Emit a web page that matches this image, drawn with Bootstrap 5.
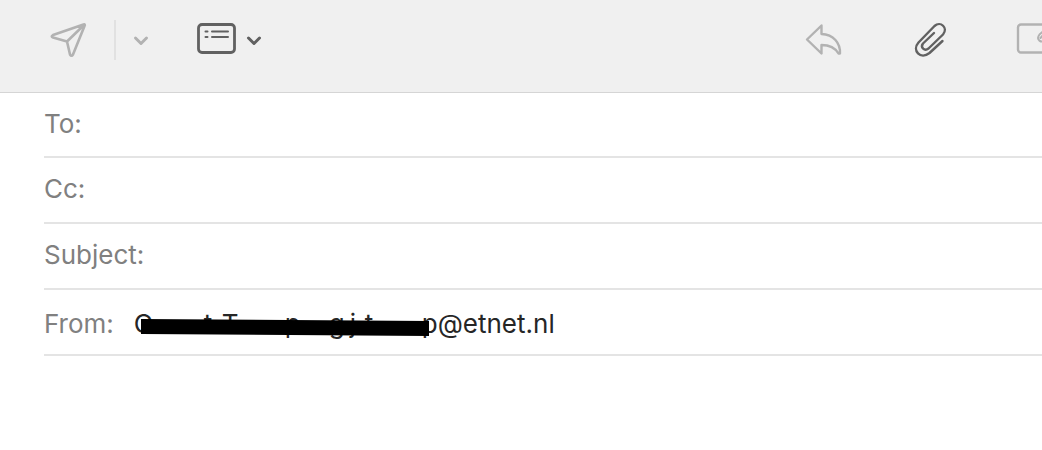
<!DOCTYPE html>
<html lang="en">
<head>
<meta charset="utf-8">
<meta name="viewport" content="width=device-width, initial-scale=1">
<title>New Message</title>
<link href="https://cdn.jsdelivr.net/npm/bootstrap@5.3.0/dist/css/bootstrap.min.css" rel="stylesheet">
<style>
  body { font-family: Inter, sans-serif; font-size: 26px; line-height: 32px; color: #262626; background: #fff; }
  .toolbar { height: 93px; padding: 0 0 12px 48px; background: #f0f0f0; border-bottom: 1px solid #d5d5d5; }
  .tool { border: 0; padding: 0; background: none; color: #616161; line-height: 0; }
  .tool:disabled { color: #b2b2b2; }
  .tool svg { fill: none; stroke: currentColor; stroke-linecap: round; stroke-linejoin: round; }
  .divider { width: 2px; height: 40px; margin: 0 16px 0 26px; background: #e1e1e1; }
  .layout-menu { margin-left: 46px; }
  .attach { margin: 0 66px; }
  .cut { width: 26px; overflow: hidden; }
  .fields { padding-left: 44px; }
  .field { height: 66px; padding-bottom: 2px; border-bottom: 2px solid #e4e4e4; }
  .field:first-child { height: 65px; }
  .field label, .caption { color: #808080; }
  .field input { font: inherit; border: 0; outline: 0; background: none; min-width: 0; }
  .sender { padding: 4px 0 0; }
  .from-value { margin-left: 20px; }
  .hidden-part { display: grid; grid-template-columns: 70px 18px 63px 44px 21px 15px 1fr; width: 288px; }
  .marker { position: absolute; left: 6px; top: 11px; width: 290px; height: 18px; }
</style>
</head>
<body>
<header class="toolbar d-flex align-items-center">
  <button class="tool" disabled aria-label="Send">
    <svg width="40" height="40" viewBox="0 0 40 40" stroke-width="2.6"><path d="M35.500 4.500 5 15Q2.500 16.500 5 17.500L19 21.500 22 34.500Q23.500 37 25 34.500L36.500 6Q37.500 4 35.500 4.500M36 5 19 21.500"/></svg>
  </button>
  <div class="divider"></div>
  <button class="tool" disabled aria-label="Send options">
    <svg width="18" height="18" viewBox="0 0 18 18" stroke-width="3"><path d="M3.500 7 9 12.500 14.500 7"/></svg>
  </button>
  <button class="tool layout-menu d-flex align-items-center" aria-label="Header fields">
    <svg width="40" height="40" viewBox="0 0 40 40"><rect x="2.500" y="4.500" width="36" height="28" rx="3.500" stroke-width="2.800"/><path d="M9.500 11.500h2M16 11.500h16M9.500 17h2M16 17h16" stroke-width="2"/></svg>
    <svg class="ms-2" width="18" height="18" viewBox="0 0 18 18" stroke-width="3"><path d="M4.500 7 10 12.500 15.500 7"/></svg>
  </button>
  <button class="tool ms-auto" disabled aria-label="Reply">
    <svg width="40" height="40" viewBox="0 0 40 40" stroke-width="2.400"><path d="M17.500 5.500 3 19.500 17.500 33.500V25C26 25 31 27.500 34.500 33.500H36C36.500 23 29.500 14.500 17.500 14Z"/></svg>
  </button>
  <button class="tool attach" aria-label="Attach">
    <svg width="40" height="40" viewBox="0 0 40 40" stroke-width="2.400"><path d="M32.500 21 19.500 33C10.500 40 1.500 30.500 8.500 22.500L24.500 6C30.500 .5 38.500 8 33 14.500L18.500 28.500C14.500 31.500 10 27.500 13 23.500L24 13"/></svg>
  </button>
  <button class="tool cut" disabled aria-label="Include attachments">
    <svg width="60" height="40" viewBox="0 0 60 40" stroke-width="2.400"><rect x="2" y="4.500" width="48" height="28" rx="3"/><path d="M28 10.500 23.500 14.500C19.500 20 25.500 23.500 29 20L36 13M28 14 24.500 18" stroke-width="2"/></svg>
  </button>
</header>
<main class="fields">
  <div class="field d-flex align-items-center"><label for="to">To:</label><input class="flex-grow-1" id="to" type="text"></div>
  <div class="field d-flex align-items-center"><label for="cc">Cc:</label><input class="flex-grow-1" id="cc" type="text"></div>
  <div class="field d-flex align-items-center"><label for="subject">Subject:</label><input class="flex-grow-1" id="subject" type="text"></div>
  <div class="field sender d-flex align-items-center">
    <span class="caption">From:</span>
    <div class="from-value position-relative d-flex">
      <span class="hidden-part"><span>C</span><span>t</span><span>T</span><span>p</span><span>g</span><span>j</span><span>t</span></span>
      <span>p@etnet.nl</span>
      <svg class="marker" viewBox="0 0 290 18" aria-hidden="true"><path d="M1 0 289 2V17L1 15Z"/></svg>
    </div>
  </div>
</main>
<script src="https://cdn.jsdelivr.net/npm/bootstrap@5.3.0/dist/js/bootstrap.bundle.min.js"></script>
</body>
</html>
